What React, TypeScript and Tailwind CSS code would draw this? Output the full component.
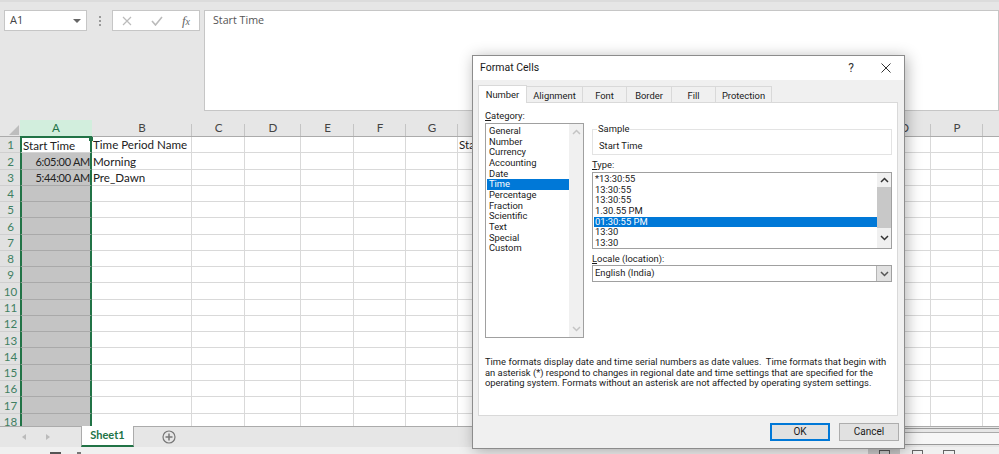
import React from "react";

const columns = ["A", "B", "C", "D", "E", "F", "G", "H", "I", "J", "K", "L", "M", "N", "O", "P", "Q"];
const rows = Array.from({ length: 18 }, (_, i) => i + 1);
const cells: Record<string, string> = {
  A1: "Start Time",
  A2: "6:05:00 AM",
  A3: "5:44:00 AM",
  B1: "Time Period Name",
  B2: "Morning",
  B3: "Pre_Dawn",
  H1: "Start Time",
};
const categories = ["General", "Number", "Currency", "Accounting", "Date", "Time", "Percentage", "Fraction", "Scientific", "Text", "Special", "Custom"];
const types = ["*13:30:55", "13:30:55", "13:30:55", "1.30.55 PM", "01:30:55 PM", "13:30", "13:30"];
const tabs = [
  { name: "Number", width: "w-[49px]" },
  { name: "Alignment", width: "w-[56px]" },
  { name: "Font", width: "w-[44px]" },
  { name: "Border", width: "w-[45px]" },
  { name: "Fill", width: "w-[44px]" },
  { name: "Protection", width: "w-[56px]" },
];

const Chevron = ({ up, color }: { up?: boolean; color: string }) => (
  <svg width="9" height="6" viewBox="0 0 9 6" fill="none" stroke={color} strokeWidth="1.5">
    <path d={up ? "M1 5 L4.5 1.5 L8 5" : "M1 1 L4.5 4.5 L8 1"} />
  </svg>
);

const FormulaBar = () => (
  <div className="flex h-[120px] shrink-0 items-start border-t-2 border-[#dcdcdc] pt-2 pl-1">
    <div className="flex h-[21px] w-[83px] items-center justify-between border border-[#c6c6c6] bg-white pr-[5px] pl-[5px] text-[11px] text-[#444]">
      <span>A1</span>
      <span className="h-0 w-0 border-x-[4px] border-t-[4px] border-x-transparent border-t-[#666]" />
    </div>
    <div className="flex h-[21px] w-[25px] flex-col items-center justify-center gap-[2px]">
      <span className="h-[2px] w-[2px] bg-[#999]" />
      <span className="h-[2px] w-[2px] bg-[#999]" />
      <span className="h-[2px] w-[2px] bg-[#999]" />
    </div>
    <div className="flex h-[21px] w-[88px] items-center justify-between border border-[#c6c6c6] bg-white pr-[9px] pl-[9px]">
      <svg width="10" height="10" viewBox="0 0 10 10" stroke="#bbb" strokeWidth="1.2" fill="none">
        <path d="M1 1 L9 9 M9 1 L1 9" />
      </svg>
      <svg width="12" height="10" viewBox="0 0 12 10" stroke="#bbb" strokeWidth="1.6" fill="none">
        <path d="M1 5 L4.5 9 L11 1" />
      </svg>
      <span className="font-['Liberation_Serif',serif] text-[13px] text-[#666] italic">
        f<span className="text-[10px]">x</span>
      </span>
    </div>
    <div className="ml-1 h-[101px] flex-1 border border-[#c6c6c6] bg-white pt-[1px] pl-2 text-[10.7px] text-[#555]">Start Time</div>
  </div>
);

const Sheet = () => (
  <div className="min-h-0 flex-1 overflow-hidden font-['Lato',sans-serif]">
    <div className="grid grid-cols-[20px_72px_100px_53px_56px_53px_52px_52px_repeat(7,60px)_53px_52px_68px] grid-rows-[17px_repeat(18,16.27px)] text-[11.6px] leading-none">
      <div className="flex items-end justify-end border-b border-[#ababab] pr-[1px] pb-[1px]">
        <div className="h-0 w-0 border-b-[10px] border-l-[10px] border-b-[#bdbdbd] border-l-transparent" />
      </div>
      {columns.map((col) => (
        <div
          key={col}
          className={
            col === "A"
              ? "flex items-center justify-center border-b border-[#217346] bg-[#d2eedd] text-[#217346]"
              : "flex items-center justify-center border-b border-[#ababab] bg-[linear-gradient(#c4c4c4,#c4c4c4)] bg-[size:1px_12px] bg-[position:right_bottom] bg-no-repeat text-[#444]"
          }
        >
          {col}
        </div>
      ))}
      {rows.map((row) => (
        <React.Fragment key={row}>
          <div className="flex items-center justify-center border-b border-[#cfcfcf] bg-[#e1e1e1] pt-[1px] pl-[1px] text-[#3f7f62]">{row}</div>
          {columns.map((col) => {
            const text = cells[col + row];
            if (col === "A") {
              return row === 1 ? (
                <div
                  key={col}
                  className="relative flex items-center border-x-2 border-t border-b border-x-[#217346] border-t-[#217346] border-b-[#d4d4d4] bg-white pt-[1px] pl-[1px] text-[#222]"
                >
                  <span className="whitespace-nowrap">{text}</span>
                  <span className="absolute -top-[1px] -right-[3px] z-10 h-[4px] w-[4px] bg-[#217346]" />
                </div>
              ) : (
                <div
                  key={col}
                  className="flex items-center justify-end border-x-2 border-b border-x-[#217346] border-b-[#a9a9a9] bg-[#c4c4c4] pt-[1px] text-[11px] tracking-[-0.3px] text-[#222]"
                >
                  <span className="whitespace-nowrap">{text}</span>
                </div>
              );
            }
            return (
              <div key={col} className="flex items-center border-r border-b border-[#d9d9d9] bg-white pt-[1px] pl-[1px] text-[#222]">
                <span className="whitespace-nowrap">{text}</span>
              </div>
            );
          })}
        </React.Fragment>
      ))}
    </div>
  </div>
);

const TabStrip = () => (
  <div className="flex h-[21px] shrink-0 items-start border-t border-[#ababab] bg-[#e6e6e6] font-['Lato',sans-serif]">
    <div className="flex h-[20px] w-[81px] items-center gap-[20px] pl-[22px]">
      <span className="h-0 w-0 border-y-[3px] border-r-[4px] border-y-transparent border-r-[#bbb]" />
      <span className="h-0 w-0 border-y-[3px] border-l-[4px] border-y-transparent border-l-[#bbb]" />
    </div>
    <div className="-mt-[1px] flex h-[21px] w-[53px] items-center justify-center border-x border-b-2 border-x-[#ababab] border-b-[#217346] bg-white text-[11px] font-bold text-[#217346]">
      Sheet1
    </div>
    <div className="flex h-[20px] w-[68px] items-center justify-center pl-[2px]">
      <svg width="14" height="14" viewBox="0 0 14 14" fill="none" stroke="#777" strokeWidth="1.2">
        <circle cx="7" cy="7" r="6" />
        <path d="M3.5 7 H10.5 M7 3.5 V10.5" strokeWidth="1.5" />
      </svg>
    </div>
    <div className="mt-[1px] ml-auto h-[17px] w-[300px] border-y border-[#999] bg-[#e6e6e6]">
      <div className="mt-[3px] h-[12px] border-t border-[#aaa] bg-[#f6f6f6]" />
    </div>
  </div>
);

const StatusBar = () => (
  <div className="flex h-[7px] shrink-0 items-start overflow-hidden bg-[#f0f0f0]">
    <div className="mt-[5px] ml-[50px] h-[2px] w-[11px] bg-[#555]" />
    <div className="mt-[5px] ml-[16px] h-[2px] w-[4px] bg-[#777]" />
    <div className="ml-auto flex h-[7px] w-[131px] items-end">
      <div className="flex h-[7px] w-[32px] items-end justify-center bg-[#c8c8c8]">
        <div className="h-[4px] w-[11px] border border-b-0 border-[#555]" />
      </div>
      <div className="ml-[12px] h-[4px] w-[11px] border border-b-0 border-[#666]" />
      <div className="ml-[20px] h-[4px] w-[12px] border border-b-0 border-[#666]" />
    </div>
  </div>
);

const FormatCells = () => (
  <div className="absolute top-[55px] left-[472px] flex h-[394px] w-[433px] flex-col border border-[#8c8c8c] bg-[#f0f0f0] font-['Roboto',sans-serif] text-[9.4px] leading-[10.65px] text-[#1a1a1a] shadow-[2px_2px_14px_rgba(0,0,0,0.3)]">
    <div className="flex h-[24px] shrink-0 items-center justify-between bg-white pr-[13px] pl-[7px]">
      <span className="text-[10.5px]">Format Cells</span>
      <div className="flex items-center gap-[27px]">
        <span className="text-[12px] text-[#333]">?</span>
        <svg width="10" height="10" viewBox="0 0 10 10" stroke="#333" strokeWidth="1" fill="none">
          <path d="M0.5 0.5 L9.5 9.5 M9.5 0.5 L0.5 9.5" />
        </svg>
      </div>
    </div>

    <div className="flex h-[22px] shrink-0 items-end pl-[5px]">
      {tabs.map((tab, i) => (
        <div
          key={tab.name}
          className={
            i === 0
              ? `z-10 -mb-[1px] flex h-[18px] items-center justify-center border border-b-0 border-[#d9d9d9] bg-white pt-[1px] ${tab.width}`
              : `flex h-[16px] items-center justify-center border border-b-0 border-l-0 border-[#d9d9d9] bg-[#f0f0f0] pt-[3px] ${tab.width}`
          }
        >
          {tab.name}
        </div>
      ))}
    </div>

    <div className="mx-[5px] flex h-[314px] w-[420px] shrink-0 flex-col border border-[#d9d9d9] bg-white pt-[7px] pl-[6px]">
      <div className="flex gap-[8px]">
        <div className="w-[99px]">
          <div className="h-[13px] leading-[11px]">
            <span className="underline">C</span>ategory:
          </div>
          <div className="flex h-[215px] border border-[#a0a0a0] bg-white">
            <div className="flex-1 pt-[2px] pl-[1px]">
              {categories.map((name) => (
                <div key={name} className={name === "Time" ? "bg-[#0078d7] pl-[2px] text-white" : "pl-[2px]"}>
                  {name}
                </div>
              ))}
            </div>
            <div className="flex w-[14px] flex-col items-center justify-between bg-[#f0f0f0] py-[5px]">
              <Chevron up color="#c4c4c4" />
              <Chevron color="#c4c4c4" />
            </div>
          </div>
        </div>

        <div className="w-[300px]">
          <div className="relative mt-[19px] flex h-[26px] items-end border border-[#e3e3e3] pb-[2px] pl-[6px]">
            <span className="absolute -top-[6px] left-[4px] bg-white px-[1px]">Sample</span>
            Start Time
          </div>
          <div className="mt-[4px] h-[13px] leading-[11px]">
            <span className="underline">T</span>ype:
          </div>
          <div className="flex h-[77px] border border-[#a0a0a0] bg-white">
            <div className="flex-1 pt-[1px] pl-[1px]">
              {types.map((name, i) => (
                <div key={i} className={i === 4 ? "bg-[#0078d7] pl-[1px] text-white" : "pl-[1px]"}>
                  {name}
                </div>
              ))}
            </div>
            <div className="flex w-[14px] flex-col items-center bg-[#f0f0f0]">
              <div className="flex h-[14px] items-center">
                <Chevron up color="#333" />
              </div>
              <div className="h-[41px] w-full bg-[#c8c8c8]" />
              <div className="flex flex-1 items-center">
                <Chevron color="#333" />
              </div>
            </div>
          </div>
          <div className="mt-[3px] h-[13px] leading-[13px]">
            <span className="underline">L</span>ocale (location):
          </div>
          <div className="flex h-[17px] items-center justify-between border border-[#a0a0a0] bg-white pl-[2px]">
            English (India)
            <div className="flex h-full w-[15px] items-center justify-center border-l border-[#b5b5b5] bg-[#e1e1e1]">
              <Chevron color="#555" />
            </div>
          </div>
        </div>
      </div>

      <p className="mt-[19px] whitespace-pre">
        {"Time formats display date and time serial numbers as date values.  Time formats that begin with\nan asterisk (*) respond to changes in regional date and time settings that are specified for the\noperating system. Formats without an asterisk are not affected by operating system settings."}
      </p>
    </div>

    <div className="flex flex-1 items-start justify-end gap-[9px] pt-[7px] pr-[5px]">
      <button className="h-[18px] w-[60px] border-2 border-[#0078d7] bg-[#e1e1e1] text-[10px] leading-none">OK</button>
      <button className="h-[18px] w-[60px] border border-[#adadad] bg-[#e1e1e1] text-[10px] leading-none">Cancel</button>
    </div>
  </div>
);

const App = () => (
  <div className="relative flex h-[454px] w-[999px] flex-col overflow-hidden bg-[#e6e6e6] font-['Open_Sans',sans-serif]">
    <FormulaBar />
    <Sheet />
    <TabStrip />
    <StatusBar />
    <FormatCells />
  </div>
);

export default App;
